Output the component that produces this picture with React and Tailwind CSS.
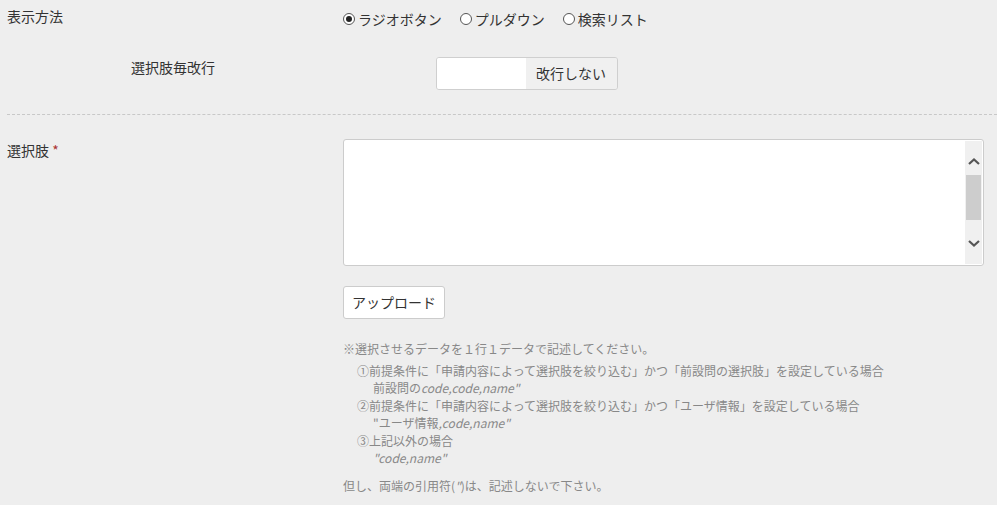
import React from "react";

const font = { fontFamily: '"Noto Sans CJK JP", "Noto Sans", sans-serif' };

function Radio({ checked, label }) {
  return (
    <label className="flex items-center gap-[3px]">
      <span className="w-[12px] h-[12px] rounded-full border border-[#555] bg-white flex items-center justify-center">
        {checked && <span className="w-[6px] h-[6px] rounded-full bg-[#222]" />}
      </span>
      <span>{label}</span>
    </label>
  );
}

function Scrollbar() {
  return (
    <div className="w-[17px] h-full bg-[#f0f0f0] flex flex-col items-center">
      <svg className="mt-[17px]" width="12" height="7" viewBox="0 0 12 7">
        <path d="M1 6 L6 1.5 L11 6" fill="none" stroke="#555" strokeWidth="2.2" />
      </svg>
      <div className="mt-[10px] w-[15px] h-[45px] bg-[#cdcdcd]" />
      <svg className="mt-[20px]" width="12" height="7" viewBox="0 0 12 7">
        <path d="M1 1 L6 5.5 L11 1" fill="none" stroke="#555" strokeWidth="2.2" />
      </svg>
    </div>
  );
}

export default function App() {
  const help = [
    { t: "①前提条件に「申請内容によって選択肢を絞り込む」かつ「前設問の選択肢」を設定している場合", indent: "pl-[14px]" },
    { t: (<>前設問の<i>code,code,name"</i></>), indent: "pl-[30px]" },
    { t: "②前提条件に「申請内容によって選択肢を絞り込む」かつ「ユーザ情報」を設定している場合", indent: "pl-[14px]" },
    { t: (<>"ユーザ情報<i>,code,name"</i></>), indent: "pl-[30px]" },
    { t: "③上記以外の場合", indent: "pl-[14px]" },
    { t: (<i>"code,name"</i>), indent: "pl-[30px]" },
  ];

  return (
    <div className="w-[997px] h-[505px] bg-[#eeeeee] text-[#333] text-[14px] overflow-hidden" style={font}>
      {/* 表示方法 */}
      <div className="flex pt-[6px] pl-[7px]">
        <div className="w-[336px] leading-[20px]">表示方法</div>
        <div className="flex items-center gap-[18px] leading-[24px] pt-[1px]">
          <Radio checked label="ラジオボタン" />
          <Radio label="プルダウン" />
          <Radio label="検索リスト" />
        </div>
      </div>

      {/* 選択肢毎改行 */}
      <div className="flex pt-[26px] pl-[131px]">
        <div className="w-[305px] leading-[18px] pt-[1px]">選択肢毎改行</div>
        <div className="flex w-[182px] h-[33px] border border-[#cfcfcf] rounded-[3px] overflow-hidden">
          <div className="w-[89px] bg-white" />
          <div className="flex-1 bg-[#f0f0f0] flex items-center pl-[10px]">改行しない</div>
        </div>
      </div>

      {/* divider */}
      <div className="ml-[7px] mt-[24px] border-t border-dashed border-[#c8c8c8]" />

      {/* 選択肢 */}
      <div className="flex pl-[7px] pt-[24px]">
        <div className="w-[336px] leading-[22px]">
          選択肢 <span className="text-[#a33]">*</span>
        </div>
        <div className="flex flex-col">
          <div className="w-[641px] h-[127px] bg-white border border-[#cccccc] rounded-[3px] flex justify-end p-[1px]">
            <Scrollbar />
          </div>
          <div className="mt-[20px]">
            <button className="h-[33px] px-[8px] bg-white border border-[#cccccc] rounded-[3px] text-[14px] text-[#333]">
              アップロード
            </button>
          </div>
          <div className="mt-[21px] text-[12px] text-[#888] leading-[17.5px]">
            <div className="mb-[4px]">※選択させるデータを１行１データで記述してください。</div>
            {help.map((h, i) => (
              <div key={i} className={h.indent}>{h.t}</div>
            ))}
            <div className="mt-[10px]">但し、両端の引用符(<i>"</i>)は、記述しないで下さい。</div>
          </div>
        </div>
      </div>
    </div>
  );
}
